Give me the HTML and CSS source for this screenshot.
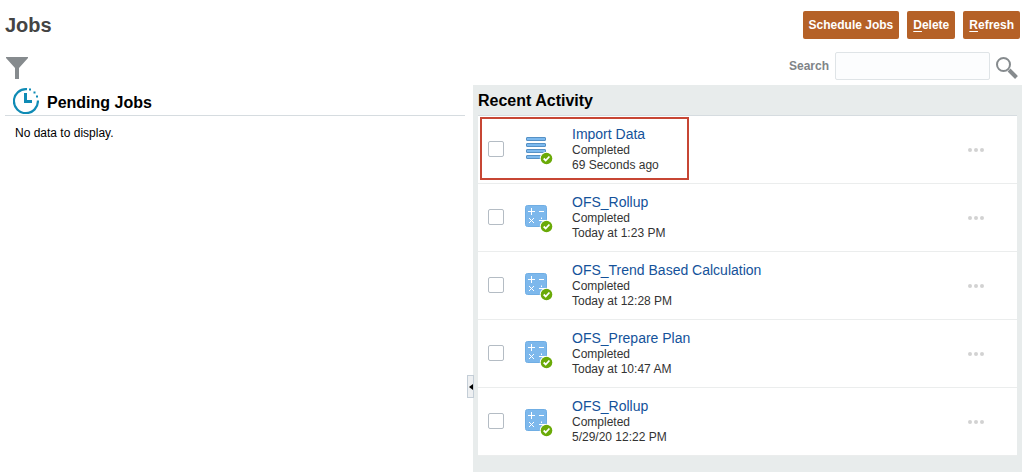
FILE: index.html
```html
<!DOCTYPE html>
<html lang="en">
<head>
<meta charset="utf-8">
<title>Jobs</title>
<link rel="stylesheet" href="styles.css">
</head>
<body>
<svg class="defs" aria-hidden="true">
  <symbol id="badge" viewBox="0 0 14 14">
    <circle cx="7" cy="7" r="6.8" fill="#fff"/>
    <circle cx="7" cy="7" r="5.8" fill="#6aaa08"/>
    <path d="M4.200 7 6.200 9 9.900 5" fill="none" stroke="#fff" stroke-width="1.8"/>
  </symbol>
  <symbol id="import" viewBox="0 0 28 28">
    <g fill="#7cb9ee" stroke="#5691c5">
      <rect x="1.5" y=".5" width="19" height="3" rx=".5"/>
      <rect x="1.5" y="6.5" width="19" height="3" rx=".5"/>
      <rect x="1.5" y="12.5" width="19" height="3" rx=".5"/>
      <rect x="1.5" y="18.5" width="19" height="3" rx=".5"/>
    </g>
    <use href="#badge" x="14.5" y="14.5" width="14" height="14"/>
  </symbol>
  <symbol id="calc" viewBox="0 0 28 28">
    <rect x=".5" y=".5" width="21" height="21" rx="2" fill="#7db8ec" stroke="#70aee4"/>
    <path d="M3 6.5h7M6.5 3v7M14 6.5h5M4 13l5 5M9 13l-5 5M14 15.5h6M16.500 12.500v1.500" fill="none" stroke="#fff"/>
    <use href="#badge" x="14.5" y="14.5" width="14" height="14"/>
  </symbol>
  <symbol id="dots" viewBox="0 0 16 4">
    <g fill="#d2d2d2"><circle cx="2" cy="2" r="2"/><circle cx="8" cy="2" r="2"/><circle cx="14" cy="2" r="2"/></g>
  </symbol>
</svg>

<header class="header">
  <h1 class="title">Jobs</h1>
  <div class="actions">
    <button class="btn" type="button">Schedule Jobs</button>
    <button class="btn" type="button"><u>D</u>elete</button>
    <button class="btn" type="button"><u>R</u>efresh</button>
  </div>
</header>

<div class="toolbar">
  <button class="icon-btn tool" type="button" aria-label="Filter">
    <svg width="22" height="22" viewBox="0 0 22 22"><path d="M0 0h22v1l-9 10v11H9V11L0 1z" fill="#868b8e"/></svg>
  </button>
  <form class="search">
    <label class="search-label" for="search">Search</label>
    <input class="search-input" id="search" type="text">
    <button class="icon-btn tool" type="button" aria-label="Run search">
      <svg width="22" height="22" viewBox="0 0 22 22"><circle cx="7.5" cy="7.5" r="6.5" fill="none" stroke="#868b8e" stroke-width="2"/><path d="m13 13 7.5 7.5" stroke="#868b8e" stroke-width="4"/></svg>
    </button>
  </form>
</div>

<main class="panels">
  <section class="pending">
    <h2 class="heading pending-heading">
      <svg width="26" height="26" viewBox="0 0 26 26" fill="none" stroke="#0f8bb5">
        <path d="M14 1.2A12 12 0 1 0 24.9 12.5" stroke-width="2.2"/>
        <path d="M12.500 5v8.500h6.500" stroke-width="3"/>
        <path d="M16 1.5h2M20.5 4.5h2M23 8.5h2" stroke-width="2"/>
      </svg>
      <span class="pending-title">Pending Jobs</span>
    </h2>
    <p class="empty">No data to display.</p>
  </section>
  <div class="splitter">
    <button class="collapse" type="button" aria-label="Collapse panel">
      <svg width="4" height="6" viewBox="0 0 4 6"><path d="M4 0v6L0 3z"/></svg>
    </button>
  </div>
  <section class="recent">
    <h2 class="heading recent-heading">Recent Activity</h2>
    <ul class="jobs">
      <li class="job">
        <div class="highlight"></div>
        <input class="check" type="checkbox" aria-label="Select Import Data">
        <svg class="job-icon" width="28" height="28"><use href="#import"/></svg>
        <div class="info"><a class="name" href="#">Import Data</a><span>Completed</span><span>69 Seconds ago</span></div>
        <button class="icon-btn more" type="button" aria-label="Actions"><svg width="16" height="4"><use href="#dots"/></svg></button>
      </li>
      <li class="job">
        <input class="check" type="checkbox" aria-label="Select OFS_Rollup">
        <svg class="job-icon" width="28" height="28"><use href="#calc"/></svg>
        <div class="info"><a class="name" href="#">OFS_Rollup</a><span>Completed</span><span>Today at 1:23 PM</span></div>
        <button class="icon-btn more" type="button" aria-label="Actions"><svg width="16" height="4"><use href="#dots"/></svg></button>
      </li>
      <li class="job">
        <input class="check" type="checkbox" aria-label="Select OFS_Trend Based Calculation">
        <svg class="job-icon" width="28" height="28"><use href="#calc"/></svg>
        <div class="info"><a class="name" href="#">OFS_Trend Based Calculation</a><span>Completed</span><span>Today at 12:28 PM</span></div>
        <button class="icon-btn more" type="button" aria-label="Actions"><svg width="16" height="4"><use href="#dots"/></svg></button>
      </li>
      <li class="job">
        <input class="check" type="checkbox" aria-label="Select OFS_Prepare Plan">
        <svg class="job-icon" width="28" height="28"><use href="#calc"/></svg>
        <div class="info"><a class="name" href="#">OFS_Prepare Plan</a><span>Completed</span><span>Today at 10:47 AM</span></div>
        <button class="icon-btn more" type="button" aria-label="Actions"><svg width="16" height="4"><use href="#dots"/></svg></button>
      </li>
      <li class="job">
        <input class="check" type="checkbox" aria-label="Select OFS_Rollup from 5/29/20">
        <svg class="job-icon" width="28" height="28"><use href="#calc"/></svg>
        <div class="info"><a class="name" href="#">OFS_Rollup</a><span>Completed</span><span>5/29/20 12:22 PM</span></div>
        <button class="icon-btn more" type="button" aria-label="Actions"><svg width="16" height="4"><use href="#dots"/></svg></button>
      </li>
    </ul>
  </section>
</main>
</body>
</html>
```
FILE: styles.css
```css
* { box-sizing: border-box; }

body {
  display: flex;
  flex-direction: column;
  min-height: 100vh;
  margin: 0;
  background: #fff;
  color: #333;
  font: 12px/15px "Liberation Sans", Arial, sans-serif;
}

svg { display: block; }

.defs { position: absolute; width: 0; height: 0; }

.header {
  display: flex;
  align-items: center;
  justify-content: space-between;
  padding: 11px 6px 0 5px;
}

.title { margin: 0; color: #444; font-size: 20px; line-height: 28px; }

.actions { display: flex; gap: 8px; }

.btn {
  height: 28px;
  padding: 0 6px;
  border: 0;
  border-radius: 2px;
  background: #b56127;
  color: #fff;
  font: bold 12px/28px "Liberation Sans", Arial, sans-serif;
}

.btn u { text-underline-offset: 2px; }

.icon-btn { padding: 0; border: 0; background: none; }

.tool { padding-top: 4px; }

.toolbar {
  display: flex;
  align-items: center;
  justify-content: space-between;
  padding: 13px 8px 5px 6px;
}

.search { display: flex; align-items: center; gap: 6px; }

.search-label { color: #808487; font-weight: bold; }

.search-input {
  width: 155px;
  height: 28px;
  border: 1px solid #dfe4e7;
  border-radius: 2px;
  background: #fcfdfe;
  font: inherit;
}

.panels {
  display: grid;
  flex: 1;
  grid-template-columns: 460fr 8px 549fr;
  padding: 0 4px 0 5px;
}

.heading {
  margin: 0;
  color: #000;
  font-size: 16px;
  line-height: 28px;
  padding-top: 2px;
  border-bottom: 1px solid #d6dce0;
}

.pending-heading {
  display: flex;
  align-items: center;
  gap: 8px;
  padding-left: 8px;
}

.pending-title { padding-top: 4px; line-height: 24px; }

.empty { margin: 0; padding: 10px; color: #000; }

.splitter { display: flex; justify-content: flex-end; }

.collapse {
  display: flex;
  align-items: center;
  justify-content: center;
  z-index: 1;
  width: 7px;
  height: 23px;
  margin: 290px -1px 0 0;
  padding: 0;
  position: relative;
  border: 1px solid #c4ced7;
  background: #eef0f2;
}

.recent { padding: 0 5px; background: #e8ecec; }

.jobs { margin: 0; padding: 0; list-style: none; background: #fff; }

.job {
  position: relative;
  display: flex;
  align-items: center;
  height: 68px;
  padding: 0 33px 1px 10px;
  border-bottom: 1px solid #ebeded;
}

.highlight {
  position: absolute;
  top: 1px;
  left: 2px;
  width: 209px;
  height: 63px;
  border: 2px solid #c74634;
  pointer-events: none;
}

.check {
  width: 16px;
  height: 16px;
  margin: 0;
  appearance: none;
  border: 1px solid #b4bcc4;
  border-radius: 2px;
  background: #fff;
}

.check:checked { background: #7db8ec; }

.job-icon { margin: 4px 19px 0 21px; }

.info {
  display: flex;
  flex: 1;
  flex-direction: column;
  align-items: flex-start;
  align-self: flex-start;
  padding-top: 10px;
}

.name {
  margin-bottom: 1px;
  color: #14529a;
  font-size: 14px;
  line-height: 16px;
  text-decoration: none;
}

.more { padding-top: 2px; }
```
